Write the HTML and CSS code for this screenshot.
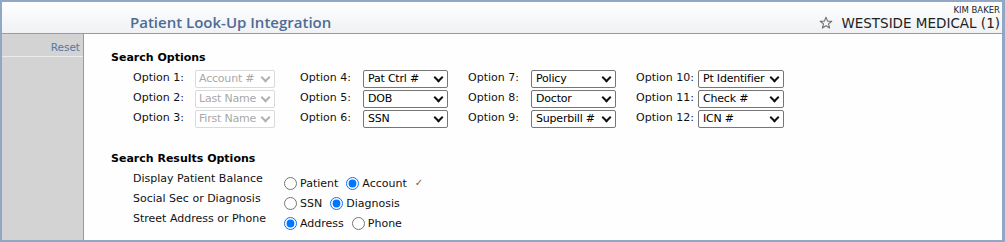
FILE: index.html
```html
<!DOCTYPE html>
<html>
<head>
<meta charset="utf-8">
<title>Patient Look-Up Integration</title>
<link rel="stylesheet" href="styles.css">
</head>
<body>
<div class="frame">
  <header class="top">
    <h1 class="title">Patient Look-Up Integration</h1>
    <div class="acct">
      <div class="user">KIM BAKER</div>
      <div class="practice">
        <svg class="star" width="14" height="14" viewBox="0 0 14 14"><path d="M7 1.2 L8.6 5.1 L12.8 5.3 L9.5 7.9 L10.6 12 L7 9.7 L3.4 12 L4.5 7.9 L1.2 5.3 L5.4 5.1 Z" fill="none" stroke="#707070" stroke-width="1.1" stroke-linejoin="round"/></svg>
        <span>WESTSIDE MEDICAL (1)</span>
      </div>
    </div>
  </header>
  <div class="body">
    <aside class="side">
      <div class="side-item"><a class="reset" href="#">Reset</a></div>
    </aside>
    <main class="content">
      <h2 class="section">Search Options</h2>
      <div class="opts">
        <label class="olabel">Option 1:</label>
        <div class="ocell dis"><select class="sel sel-sm" disabled><option>Account #</option></select></div>
        <label class="olabel">Option 4:</label>
        <div class="ocell"><select class="sel"><option>Pat Ctrl #</option></select></div>
        <label class="olabel">Option 7:</label>
        <div class="ocell"><select class="sel"><option>Policy</option></select></div>
        <label class="olabel">Option 10:</label>
        <div class="ocell"><select class="sel sel-lg"><option>Pt Identifier</option></select></div>

        <label class="olabel">Option 2:</label>
        <div class="ocell dis"><select class="sel sel-sm" disabled><option>Last Name</option></select></div>
        <label class="olabel">Option 5:</label>
        <div class="ocell"><select class="sel"><option>DOB</option></select></div>
        <label class="olabel">Option 8:</label>
        <div class="ocell"><select class="sel"><option>Doctor</option></select></div>
        <label class="olabel">Option 11:</label>
        <div class="ocell"><select class="sel sel-lg"><option>Check #</option></select></div>

        <label class="olabel">Option 3:</label>
        <div class="ocell dis"><select class="sel sel-sm" disabled><option>First Name</option></select></div>
        <label class="olabel">Option 6:</label>
        <div class="ocell"><select class="sel"><option>SSN</option></select></div>
        <label class="olabel">Option 9:</label>
        <div class="ocell"><select class="sel"><option>Superbill #</option></select></div>
        <label class="olabel">Option 12:</label>
        <div class="ocell"><select class="sel sel-lg"><option>ICN #</option></select></div>
      </div>

      <h2 class="section section-2">Search Results Options</h2>
      <div class="results">
        <div class="rrow">
          <span class="rlabel">Display Patient Balance</span>
          <label class="radio"><input type="radio" name="bal"><span>Patient</span></label>
          <label class="radio"><input type="radio" name="bal" checked><span>Account</span></label>
          <span class="check">&#10003;</span>
        </div>
        <div class="rrow">
          <span class="rlabel">Social Sec or Diagnosis</span>
          <label class="radio"><input type="radio" name="ssn"><span>SSN</span></label>
          <label class="radio"><input type="radio" name="ssn" checked><span>Diagnosis</span></label>
        </div>
        <div class="rrow">
          <span class="rlabel">Street Address or Phone</span>
          <label class="radio"><input type="radio" name="addr" checked><span>Address</span></label>
          <label class="radio"><input type="radio" name="addr"><span>Phone</span></label>
        </div>
      </div>
    </main>
  </div>
</div>
</body>
</html>
```

FILE: styles.css
```css
* { box-sizing: border-box; }

html, body {
  margin: 0;
  padding: 0;
  background: #ffffff;
}

body {
  font-family: "DejaVu Sans", Verdana, sans-serif;
  font-size: 11px;
  color: #111;
}

.frame {
  width: 1005px;
  height: 242px;
  border-style: solid;
  border-color: #90a7c6;
  border-width: 2px 3px 2px 2px;
  display: flex;
  flex-direction: column;
  background: #fdfdfd;
}

.top {
  height: 32px;
  flex: none;
  display: flex;
  justify-content: space-between;
  background: linear-gradient(#ffffff, #eff1f4);
  border-bottom: 1px solid #9c9c9c;
}

.title {
  margin: 0;
  padding: 10px 0 0 128px;
  font-family: "Open Sans", sans-serif;
  font-weight: 600;
  font-size: 15px;
  line-height: 20px;
  color: #4d6c95;
}

.acct {
  display: flex;
  flex-direction: column;
  align-items: flex-end;
  padding: 3px 2px 0 0;
}

.user {
  font-size: 8.5px;
  line-height: 10px;
  color: #222;
}

.practice {
  display: flex;
  align-items: center;
  gap: 8px;
  font-size: 13.5px;
  line-height: 16px;
  color: #222;
}

.star { display: block; margin-top: -1px; }

.body {
  flex: 1;
  display: flex;
  min-height: 0;
}

.side {
  width: 82px;
  flex: none;
  background: #d3d3d3;
  border-right: 1px solid #9a9a9a;
}

.side-item {
  height: 23px;
  border-bottom: 1px solid #ececec;
  text-align: right;
  padding: 7px 3px 0 0;
  line-height: 13px;
}

.reset {
  font-size: 10.5px;
  color: #56779f;
  text-decoration: none;
}

.content {
  flex: 1;
  padding: 17px 0 0 27px;
  background: #fefefe;
}

.section {
  margin: 0;
  font-size: 11px;
  font-weight: bold;
  line-height: 14px;
  color: #000;
}

.section-2 { margin-top: 22px; }

.opts {
  display: grid;
  grid-template-columns: 62px 105px 63px 105px 63px 105px 62px 86px;
  grid-auto-rows: 20px;
  margin: 5px 0 0 22px;
}

.olabel {
  padding-top: 1px;
  line-height: 14px;
  color: #111;
}

.ocell {
  position: relative;
  display: flex;
  align-items: flex-start;
  width: max-content;
}

.ocell::after {
  content: "";
  position: absolute;
  top: 4px;
  right: 6px;
  width: 5px;
  height: 5px;
  border-right: 2px solid #111;
  border-bottom: 2px solid #111;
  transform: rotate(45deg);
  pointer-events: none;
}

.ocell.dis::after { border-color: #b0b0b0; }

.sel {
  appearance: none;
  -webkit-appearance: none;
  width: 85px;
  height: 18px;
  padding: 0 0 0 4px;
  font-family: "DejaVu Sans", Verdana, sans-serif;
  font-size: 11px;
  letter-spacing: -0.2px;
  line-height: 16px;
  color: #000;
  border: 1px solid #767676;
  border-radius: 2px;
  background: #fff;
}

.sel-sm { width: 80px; padding-left: 3px; border-color: #dadada; color: #a8a8a8; background: #fff; opacity: 1; }
.sel-lg { width: 86px; }

.results {
  margin: 7px 0 0 22px;
}

.rrow {
  display: flex;
  align-items: flex-start;
  height: 20px;
}

.rlabel {
  width: 151px;
  line-height: 12px;
  color: #111;
}

.radio {
  display: flex;
  align-items: center;
  margin-top: 4px;
  margin-right: 8px;
  line-height: 13px;
}

.radio input {
  width: 13px;
  height: 13px;
  margin: 0 3px 0 0;
}

.check {
  margin-top: 3px;
  font-size: 10px;
  line-height: 13px;
  color: #666;
}
```
